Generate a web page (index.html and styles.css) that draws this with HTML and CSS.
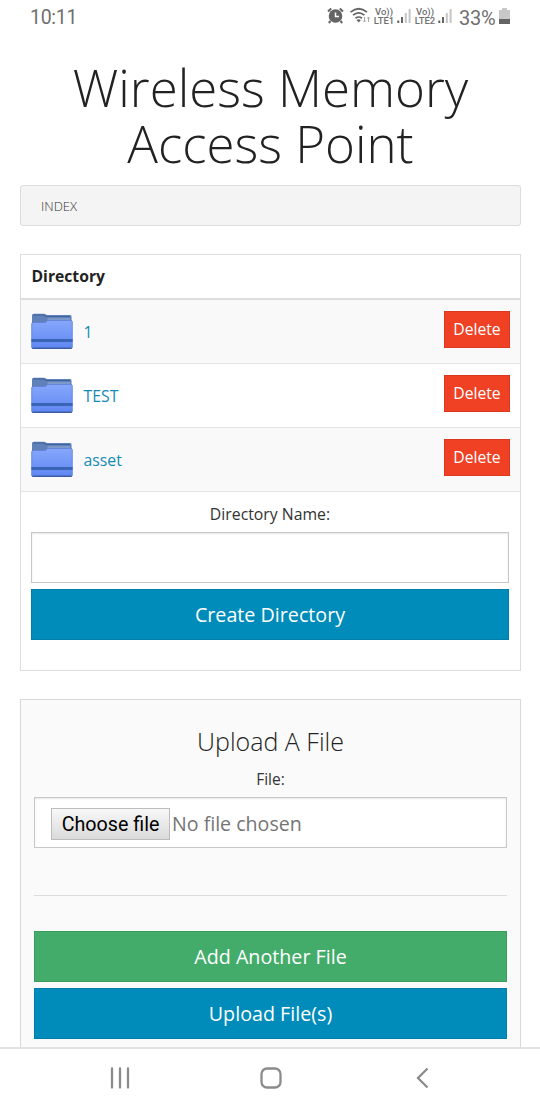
FILE: index.html
```html
<!DOCTYPE html>
<html lang="en">
<head>
<meta charset="utf-8">
<title>Wireless Memory Access Point</title>
<link rel="stylesheet" href="styles.css">
</head>
<body>
<svg class="defs" width="0" height="0">
  <defs>
    <linearGradient id="front" x1="0" y1="0" x2="0" y2="1"><stop offset="0" stop-color="#86a7fc"/><stop offset="1" stop-color="#5f87f3"/></linearGradient>
    <symbol id="folder" viewBox="0 0 43 38" preserveAspectRatio="none">
      <path d="M1 12V2.500Q1 .8 2.700 .8H13.500L16.500 2H40Q41.500 2 41.500 3.500V12Z" fill="#5f80b8"/>
      <path d="M2.500 2H13L15.500 3.500H40" fill="none" stroke="#42659f" stroke-width="1.200"/>
      <path d="M17 5H40V8H17Z" fill="#7c99cc"/>
      <path d="M.7 11Q.7 9.500 2 9.500H14.500L17 7.500H41Q42.300 7.500 42.300 9V34Q42.300 35.500 41 35.500H2Q.7 35.500 .7 34Z" fill="url(#front)" stroke="#5d80d5" stroke-width=".8"/>
      <path d="M.5 26H42.500V29H.5Z" fill="#3764b4"/>
      <path d="M1.500 35.300H41.500" stroke="#3d5da3" stroke-width="1.400"/>
    </symbol>
    <symbol id="signal" viewBox="0 0 14 16">
      <path d="M1.300 12.500V15M5 9V15" stroke="#646464" stroke-width="2"/>
      <path d="M8.800 5V15M12.600 1V15" stroke="#c5c5c5" stroke-width="2"/>
    </symbol>
  </defs>
</svg>
<div class="phone">
  <header class="status">
    <span class="clock">10:11</span>
    <svg class="alarm" viewBox="0 0 18 18" width="18" height="18">
      <circle cx="8.500" cy="9" r="6.800" fill="#646464"/><path d="M1 4.500L4.200 1.500M12.800 1.500L16 4.500M3.500 14L1.800 16M13.500 14L15.200 16" stroke="#646464" stroke-width="2"/><path d="M8.500 5.500V9.400H12" fill="none" stroke="#fff" stroke-width="1.500"/>
    </svg>
    <svg class="wifi" viewBox="0 0 21 18" width="21" height="18">
      <g fill="none" stroke="#646464" stroke-width="1.700"><path d="M.5 5.200Q8.700 -1.700 17 5.200M3 8.200Q8.700 3.600 14.400 8.200M5.500 11.200Q8.700 8.800 12 11.200"/></g>
      <path d="M8.700 15.500L6.500 12.900Q8.700 11.400 10.900 12.900Z" fill="#646464"/>
      <path d="M14.500 10V15M13 13.500L14.500 15L16 13.500M18.500 15V10M17 11.500L18.500 10L20 11.500" fill="none" stroke="#a8a8a8"/>
    </svg>
    <span class="lte"><span>Vo))</span><span>LTE1</span></span>
    <svg class="sig" width="14" height="16"><use href="#signal"/></svg>
    <span class="lte lte-two"><span>Vo))</span><span>LTE2</span></span>
    <svg class="sig" width="14" height="16"><use href="#signal"/></svg>
    <span class="percent">33%</span>
    <svg class="battery" viewBox="0 0 11 16" width="11" height="16"><path d="M3 0H8V2H11V16H0V2H3Z" fill="#c8c8c8"/><path d="M0 11H11V16H0Z" fill="#646464"/></svg>
  </header>

  <main class="page">
    <h1 class="title">Wireless Memory<br>Access Point</h1>
    <nav class="crumbs"><span>INDEX</span></nav>

    <section class="table">
      <div class="thead"><span>Directory</span></div>
      <div class="row odd"><svg class="folder"><use href="#folder"/></svg><a class="link">1</a><button class="delete">Delete</button></div>
      <div class="row"><svg class="folder"><use href="#folder"/></svg><a class="link">TEST</a><button class="delete">Delete</button></div>
      <div class="row odd"><svg class="folder"><use href="#folder"/></svg><a class="link">asset</a><button class="delete">Delete</button></div>
      <div class="create">
        <label class="label"><span>Directory Name:</span></label>
        <div class="field"></div>
        <button class="button">Create Directory</button>
      </div>
    </section>

    <section class="panel">
      <h2 class="subtitle"><span>Upload A File</span></h2>
      <label class="label file-label"><span>File:</span></label>
      <div class="field file"><span class="choose">Choose file</span><span class="none">No file chosen</span></div>
      <div class="rule"></div>
      <button class="button green">Add Another File</button>
      <button class="button">Upload File(s)</button>
    </section>
  </main>

  <footer class="navbar">
    <svg viewBox="0 0 540 61" width="540" height="61" fill="none" stroke="#8b8b8b" stroke-width="2.300">
      <path d="M112 19.500V38.500M120 19.500V38.500M128 19.500V38.500" stroke-linecap="round"/>
      <rect x="261.500" y="19.500" width="19" height="19" rx="5.500"/>
      <path d="M427.500 19.500L418 29L427.500 38.500"/>
    </svg>
  </footer>
</div>
</body>
</html>
```
FILE: styles.css
```css
* { box-sizing: border-box; }
body { margin: 0; background: #fff; font-family: "Open Sans", sans-serif; color: #222; }
.defs { display: block; }
.phone { width: 540px; height: 1110px; display: flex; flex-direction: column; overflow: hidden; }
.status { height: 36px; flex: none; display: flex; align-items: center; padding: 0 29px 4px 30px; font-family: Roboto, sans-serif; color: #707070; }
.status svg { flex: none; }
.clock { font-size: 19.5px; letter-spacing: -.3px; line-height: 24px; margin-top: 4px; width: 297px; flex: none; }
.alarm { margin-right: 5px; }
.wifi { margin-right: 2px; }
.lte { display: flex; flex-direction: column; align-items: center; font-size: 9.5px; line-height: 9px; font-weight: 500; width: 22px; flex: none; margin-right: 2px; }
.lte-two { margin-left: 3px; }
.percent { font-size: 20px; line-height: 24px; margin: 3px 4px 0 7px; letter-spacing: -.3px; }

.page { flex: 1; min-height: 0; overflow: hidden; padding: 23px 19px 0 20px; }
.title { margin: 0; font-size: 51px; line-height: 56px; font-weight: 300; text-align: center; height: 126px; white-space: nowrap; }
.crumbs { height: 41px; border: 1px solid #dcdcdc; border-radius: 3px; background: #f4f4f4; padding: 0 20px; display: flex; align-items: center; font-size: 13px; font-weight: 300; color: #333; }
.table { margin-top: 28px; height: 417px; border: 1px solid #ddd; }
.thead { height: 45px; border-bottom: 2px solid #ddd; padding: 0 10.5px 2px; display: flex; align-items: center; font-size: 15.7px; font-weight: 700; }
.row { height: 64px; border-bottom: 1px solid #e4e4e4; padding: 11px 10px; display: flex; }
.odd { background: #f9f9f9; }
.folder { width: 42px; height: 38px; margin-top: 2px; }
.link { margin: 10px auto 0 10.5px; font-size: 15.8px; line-height: 22px; color: #158bb5; }
.delete { width: 66px; height: 37px; border: 1px solid #dc3820; background: #f04124; color: #fff; padding: 0 0 2px; font: 15.7px/22px "Open Sans", sans-serif; }
.create { padding: 10px 11px 0 10px; }
.label { display: block; height: 30px; font-size: 15.8px; line-height: 24px; text-align: center; color: #333; }
.field { height: 51px; border: 1px solid #c8c8c8; background: #fff; box-shadow: inset 0 1px 2px rgba(0,0,0,.1); margin-bottom: 6px; }
.button { display: block; width: 100%; height: 51px; border: 1px solid #007eaa; background: #008cba; color: #fff; padding: 0; font: 19.7px/28px "Open Sans", sans-serif; }
.panel { margin-top: 28px; height: 400px; border: 1px solid #d8d8d8; background: #fafafa; padding: 23px 13px 0; }
.subtitle { margin: 0; font-size: 25px; line-height: 36px; font-weight: 300; text-align: center; height: 44px; }
.file-label { font-size: 15.5px; }
.file { display: flex; align-items: center; padding: 3px 16px 0; margin: 0 0 47px; }
.choose { width: 119px; height: 32px; border: 1px solid #bcbcbc; background: linear-gradient(#f8f8f8, #dadada); color: #000; font: 19.7px/31px Roboto, sans-serif; text-align: center; white-space: nowrap; }
.none { font-size: 19.6px; line-height: 28px; color: #757575; margin: 0 0 0 2px; white-space: nowrap; }
.rule { height: 1px; background: #ddd; margin-bottom: 35px; }
.green { border-color: #3b9d5c; background: #43ac6a; margin-bottom: 6px; }
.navbar { height: 63px; flex: none; border-top: 2px solid #e2e2e2; background: #fff; }
.navbar svg { display: block; }
```
